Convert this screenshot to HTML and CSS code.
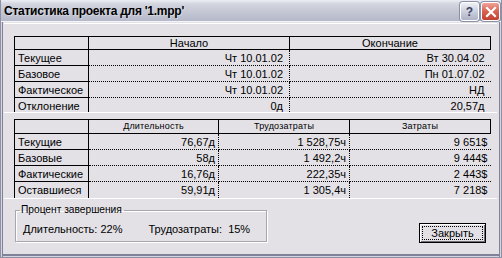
FILE: index.html
```html
<!DOCTYPE html>
<html lang="ru">
<head>
<meta charset="utf-8">
<link rel="stylesheet" href="styles.css">
</head>
<body>
<div class="window">
  <div class="titlebar">
    <span class="title">Статистика проекта для '1.mpp'</span>
    <div class="tb-buttons">
      <span class="tb-btn help">?</span>
      <span class="tb-btn close"><svg width="12" height="12" viewBox="0 0 12 12"><path d="M2 2 L10 10 M10 2 L2 10" stroke="#fff" stroke-width="2.2" stroke-linecap="square"/></svg></span>
    </div>
  </div>
  <div class="client">
    <div class="panel panel-top">
      <table class="grid g1">
        <colgroup><col class="c-label"><col class="c-wide"><col class="c-wide"></colgroup>
        <tr class="head"><th></th><th>Начало</th><th>Окончание</th></tr>
        <tr><td class="lbl">Текущее</td><td class="val">Чт 10.01.02</td><td class="val last">Вт 30.04.02</td></tr>
        <tr><td class="lbl">Базовое</td><td class="val">Чт 10.01.02</td><td class="val last">Пн 01.07.02</td></tr>
        <tr><td class="lbl">Фактическое</td><td class="val">Чт 10.01.02</td><td class="val last">НД</td></tr>
        <tr class="end"><td class="lbl">Отклонение</td><td class="val">0д</td><td class="val last">20,57д</td></tr>
      </table>
    </div>
    <div class="panel panel-bottom">
      <table class="grid g2">
        <colgroup><col class="c-label"><col class="c-dur"><col class="c-work"><col class="c-cost"></colgroup>
        <tr class="head small"><th></th><th>Длительность</th><th>Трудозатраты</th><th>Затраты</th></tr>
        <tr><td class="lbl">Текущие</td><td class="val">76,67д</td><td class="val">1 528,75ч</td><td class="val last">9 651$</td></tr>
        <tr><td class="lbl">Базовые</td><td class="val">58д</td><td class="val">1 492,2ч</td><td class="val last">9 444$</td></tr>
        <tr><td class="lbl">Фактические</td><td class="val">16,76д</td><td class="val">222,35ч</td><td class="val last">2 443$</td></tr>
        <tr class="end"><td class="lbl">Оставшиеся</td><td class="val">59,91д</td><td class="val">1 305,4ч</td><td class="val last">7 218$</td></tr>
      </table>
    </div>
    <div class="footer">
      <fieldset class="group">
        <legend>Процент завершения</legend>
        <span class="pct">Длительность: 22%</span>
        <span class="pct">Трудозатраты:&nbsp; 15%</span>
      </fieldset>
      <button class="btn"><span class="focus">Закрыть</span></button>
    </div>
  </div>
</div>
</body>
</html>
```

FILE: styles.css
```css
* { box-sizing: border-box; }
html, body { margin: 0; padding: 0; background: #e3e1e6; }
body { font-family: "Liberation Sans", Arial, sans-serif; font-size: 11px; color: #000; }

.window {
  width: 502px;
  height: 258px;
  display: flex;
  flex-direction: column;
  background: #e3e1e6;
  border: 1px solid #8d90a6;
  border-top: none;
  box-shadow: inset 1px 0 0 #d4d5df, inset 2px 0 0 #7f8299, inset -1px 0 0 #d4d5df, inset -2px 0 0 #7f8299, inset 0 -1px 0 #d4d5df, inset 0 -3px 0 #7f8299;
  overflow: hidden;
}

.titlebar {
  height: 22px;
  flex: none;
  display: flex;
  align-items: center;
  justify-content: space-between;
  padding: 0 0 0 4px;
  margin: 0 -1px;
  background: linear-gradient(to bottom, #eceef4 0%, #d2d4de 20%, #c3c6d3 60%, #b5b8c9 100%);
  border-bottom: 1px solid #f4f4f8;
}
.title {
  font-weight: bold;
  font-size: 12px;
  color: #000;
  letter-spacing: -0.25px;
  text-shadow: 1px 1px 0 rgba(255,255,255,0.35);
}
.tb-buttons { display: flex; gap: 2px; padding-right: 2px; align-self: flex-start; padding-top: 2px; }
.tb-btn {
  width: 19px;
  height: 19px;
  border-radius: 3px;
  display: flex;
  align-items: center;
  justify-content: center;
  border: 1px solid #fff;
  box-shadow: 0 0 0 1px #8c90a6;
}
.help {
  background: linear-gradient(to bottom, #eef0f6, #c5c9d8 60%, #aeb2c6);
  color: #3c4260;
  font-weight: bold;
  font-size: 12px;
}
.close {
  background: linear-gradient(to bottom, #f0a397, #d9604f 50%, #c0402f);
}

.client {
  flex: 1;
  display: flex;
  flex-direction: column;
  padding: 1px 4px 0 3px;
}

.panel {
  overflow: hidden;
  padding-left: 10px;
}
.panel-top {
  height: 90px;
  padding-top: 12px;
  border-top: 1px solid #ffffff;
  border-bottom: 1px solid #ffffff;
}
.panel-bottom {
  height: 86px;
  padding-top: 6px;
  border-bottom: 1px solid #ffffff;
}

.grid {
  border-collapse: collapse;
  table-layout: fixed;
  font-size: 11px;
}
.g1 { width: 477px; }
.g2 { width: 476px; }
.g1 .c-label, .g2 .c-label { width: 74px; }
.g1 .c-wide { width: 201px; }
.g2 .c-dur { width: 130px; }
.g2 .c-work { width: 131px; }
.g2 .c-cost { width: 141px; }

.grid th {
  font-weight: normal;
  border: 1px solid #000;
  height: 13px;
  padding: 0;
  line-height: 11px;
  text-align: center;
}
.grid .head.small th { font-size: 9px; height: 14px; letter-spacing: 0.2px; }
.grid td {
  height: 16px;
  padding: 0;
  line-height: 14px;
  white-space: nowrap;
  overflow: hidden;
}
.grid td.lbl {
  border-left: 1px solid #000;
  border-right: 1px solid #000;
  border-bottom: 1px solid #000;
  padding-left: 3px;
}
.grid td.val {
  text-align: right;
  padding-right: 6px;
  border-right: 1px dotted #000;
  border-bottom: 1px dotted #000;
}
.grid td.val.last { border-right: none; }
.g2 td.val { padding-right: 3px; }
.grid tr.end td { border-bottom: none; }

.footer {
  flex: 1;
  display: flex;
  align-items: flex-start;
  justify-content: space-between;
  padding: 5px 11px 0 11px;
}
.group {
  width: 252px;
  height: 38px;
  margin: 0;
  padding: 6px 0 0 7px;
  border: 1px solid #a7a6ae;
  box-shadow: 1px 1px 0 #fff, inset 1px 1px 0 #fff;
  display: flex;
  gap: 26px;
}
.group legend {
  padding: 0 2px 0 1px;
  margin-left: -3px;
  font-size: 10.2px;
  line-height: 12px;
}
.pct { line-height: 14px; }

.btn {
  margin-top: 19px;
  width: 67px;
  height: 20px;
  padding: 2px;
  background: #e3e1e6;
  border: 1px solid #000;
  box-shadow: inset 1px 1px 0 #fff, inset -1px -1px 0 #6e6d78;
  font-family: "Liberation Sans", Arial, sans-serif;
  font-size: 11px;
  color: #000;
  display: flex;
}
.btn .focus {
  flex: 1;
  border: 1px dotted #000;
  display: flex;
  align-items: center;
  justify-content: center;
  line-height: 12px;
}
```
